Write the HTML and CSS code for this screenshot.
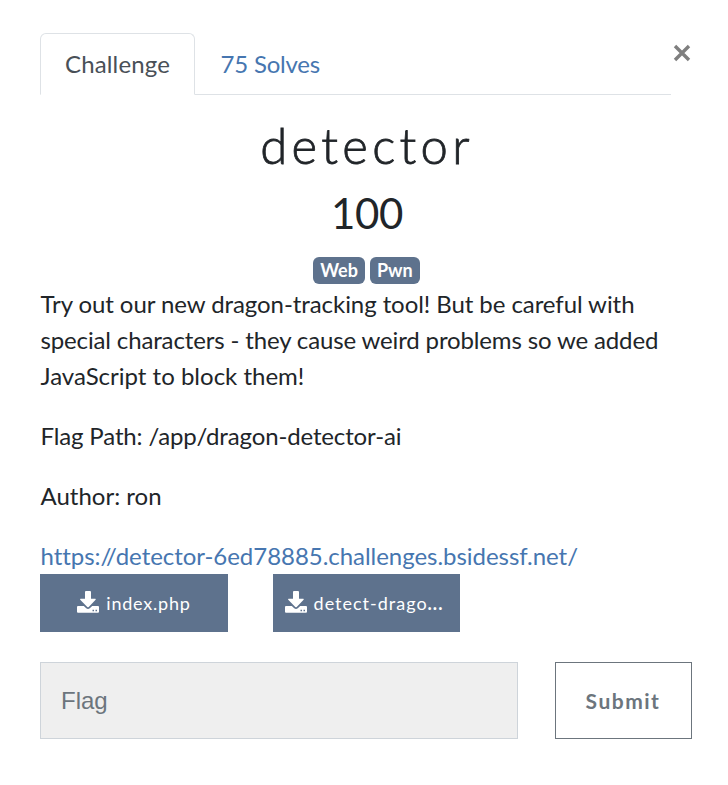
FILE: index.html
```
<!DOCTYPE html>
<html lang="en">
<head>
<meta charset="utf-8">
<title>detector</title>
<link rel="stylesheet" href="styles.css">
</head>
<body>
<main class="modal">
  <header class="top">
    <nav class="tabs">
      <a class="tab active">Challenge</a>
      <a class="tab solves">75 Solves</a>
    </nav>
    <button class="close" aria-label="Close"><svg width="18" height="18" viewBox="0 0 18 18"><path d="M2 2 16 16M16 2 2 16"/></svg></button>
  </header>
  <h2 class="name">detector</h2>
  <h3 class="value">100</h3>
  <div class="tags"><span class="badge">Web</span><span class="badge">Pwn</span></div>
  <section class="desc">
    <p><span class="intro">Try out our new dragon-tracking tool! But be careful with</span> <span class="middle">special characters - they cause weird problems so we added</span> JavaScript to block them!</p>
    <p class="path">Flag Path: /app/dragon-detector-ai</p>
    <p>Author: ron</p>
  </section>
  <a class="link">https://detector-6ed78885.challenges.bsidessf.net/</a>
  <div class="files">
    <a class="file"><svg class="icon" viewBox="0 0 22 22"><path fill-rule="evenodd" d="M8 1q0-1 1-1h4q1 0 1 1v6.800h4.200q1 .2.4 1L11.700 16q-.7.6-1.400 0L3.200 8.800q-.5-.9.5-1H8zM1 15h5.800l2.400 2.300q1.800 1.400 3.600 0L15.200 15H21q1 0 1 1v4.700q0 1-1 1H1q-1 0-1-1V16q0-1 1-1zM15.500 18.700v1.500H17v-1.500zM18.500 18.700v1.500H20v-1.500z"/></svg><span>index.php</span></a>
    <a class="file"><svg class="icon" viewBox="0 0 22 22"><path fill-rule="evenodd" d="M8 1q0-1 1-1h4q1 0 1 1v6.800h4.200q1 .2.4 1L11.700 16q-.7.6-1.400 0L3.200 8.800q-.5-.9.5-1H8zM1 15h5.800l2.400 2.300q1.800 1.400 3.600 0L15.200 15H21q1 0 1 1v4.700q0 1-1 1H1q-1 0-1-1V16q0-1 1-1zM15.500 18.700v1.500H17v-1.500zM18.500 18.700v1.500H20v-1.500z"/></svg><span>detect-drago<b>...</b></span></a>
  </div>
  <form class="submit-row">
    <input class="flag" type="text" placeholder="Flag">
    <button class="submit" type="button">Submit</button>
  </form>
</main>
</body>
</html>
```
FILE: styles.css
```
* { box-sizing: border-box; }
body { margin: 0; background: #fff; color: #212529; font: 24px/36px Lato, sans-serif; font-variant-ligatures: none; }
.modal { padding: 33px 36px 0 40px; }
.top { display: flex; height: 62px; }
.tabs { display: flex; flex: none; width: 631px; border-bottom: 1px solid #dee2e6; }
.tab { height: 62px; padding: 12px 24px; border: 1px solid transparent; color: #4676b0; }
.active { width: 155px; letter-spacing: .15px; color: #495057; background: #fff; border-color: #dee2e6 #dee2e6 #fff; border-radius: 6px 6px 0 0; }
.solves { padding-left: 24.5px; letter-spacing: -.2px; }
.close { display: block; width: 22px; height: 40px; padding: 0 0 0 1px; border: 0; background: none; line-height: 0; }
.close path { fill: none; stroke: #7f7f7f; stroke-width: 3.4; }
.name, .value { margin: 0; text-align: center; padding-left: 3px; }
.name { margin-top: 21px; padding-left: 2px; font-size: 49px; line-height: 58px; font-weight: 300; letter-spacing: 4.3px; -webkit-text-stroke: .8px #212529; }
.value { margin-top: 14px; padding-left: 2px; font-size: 42px; line-height: 50px; font-weight: 400; letter-spacing: -.3px; }
.tags { display: flex; justify-content: center; gap: 5px; margin-top: 19px; padding-left: 1px; }
.badge { height: 27px; padding: 0 7px; border-radius: 6px; background: #5e728d; color: #fff; font-size: 18px; line-height: 26px; font-weight: 700; }
.desc { margin-top: 2px; padding-left: .5px; }
.desc p { margin: 0 0 24px; }
.intro { letter-spacing: -.07px; }
.middle { letter-spacing: -.14px; }
.desc .path { letter-spacing: -.14px; }
.link { display: block; padding-left: .5px; color: #4676b0; letter-spacing: -.04px; }
.files { display: flex; gap: 45px; }
.file { display: flex; align-items: center; justify-content: center; gap: 7px; width: 188px; height: 58px; background: #5e728d; color: #fff; font-size: 18px; letter-spacing: .8px; white-space: nowrap; }
.file + .file { width: 187px; padding-right: 5px; letter-spacing: 1px; }
.icon { width: 22px; height: 22px; fill: #fff; margin-top: -3px; }
.submit-row { display: flex; justify-content: space-between; width: 652px; margin: 30px 0 0; }
.flag { width: 478px; height: 77px; padding: 0 20px; border: 1px solid #ced4da; border-radius: 0; background: #efefef; font: 24px "Liberation Sans", sans-serif; }
.flag::placeholder { color: #6c757d; opacity: 1; }
.submit { width: 137px; height: 77px; padding: 0 1px 0 0; border: 1px solid #6c757d; background: #fff; color: #6c757d; font: 700 21px Lato, sans-serif; letter-spacing: 1.5px; }
```
